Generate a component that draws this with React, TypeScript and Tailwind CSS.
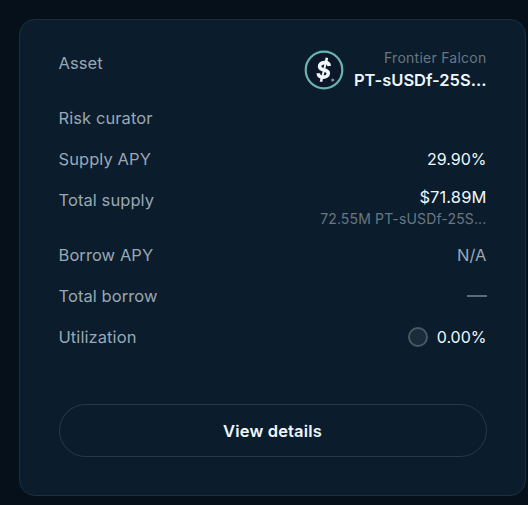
import React from "react";

const Label: React.FC<{ children: React.ReactNode }> = ({ children }) => (
  <span className="text-[16.5px] tracking-[0.08px] text-[#99a7b4]">{children}</span>
);

const AssetIcon: React.FC = () => (
  <svg width="40" height="40" viewBox="0 0 40 40" fill="none" className="-mt-px">
    <circle cx="20" cy="20" r="18.3" fill="#0c172a" stroke="#68b5ad" strokeWidth="2.2" />
    <path
      d="M25.300 16c-.3-2.500-2.500-3.600-5-3.400-3 .2-4.900 2-4.700 4.200.5 4.400 8.800 2.100 8.700 6.400-.1 2.500-2.400 4.100-5.100 4-3 0-4.800-1.600-4.900-4"
      stroke="#eef7fc"
      strokeWidth="3.600"
    />
    <path d="M22.900 7.800l-1.200 6M18.200 26l-1.200 5.800" stroke="#eef7fc" strokeWidth="2.600" />
    <path d="M21.700 13l-3.400 14" stroke="#eef7fc" strokeWidth="2" />
    <circle cx="28.700" cy="30" r="1.600" fill="#7f8b9a" />
  </svg>
);

const App: React.FC = () => {
  return (
    <div className="h-[505px] w-[528px] overflow-hidden bg-[#05101b] pl-[19px] pt-[19px] font-['Inter',sans-serif] text-base leading-6 text-[#eef7fc]">
      <div className="flex h-[477px] w-[507px] flex-col rounded-2xl border border-[#1b2f3d] bg-[#0b1c2c] px-[38.5px] pt-[31px]">
        <div className="flex h-[55px] justify-between">
          <Label>Asset</Label>
          <div className="flex gap-[10px]">
            <AssetIcon />
            <div className="text-right">
              <div className="mb-[3px] text-sm leading-[14px] tracking-[0.25px] text-[#687782]">
                Frontier Falcon
              </div>
              <div className="text-[16.5px] font-semibold">PT-sUSDf-25S...</div>
            </div>
          </div>
        </div>
        <div className="flex h-[41px] justify-between">
          <Label>Risk curator</Label>
        </div>
        <div className="flex h-[41px] justify-between">
          <Label>Supply APY</Label>
          <span>29.90%</span>
        </div>
        <div className="flex h-[55px] justify-between">
          <Label>Total supply</Label>
          <div className="-mt-[3px] text-right">
            <div className="text-[16.5px] tracking-[0.1px]">$71.89M</div>
            <div className="text-sm leading-5 tracking-[0.15px] text-[#687782]">
              72.55M PT-sUSDf-25S...
            </div>
          </div>
        </div>
        <div className="flex h-[41px] justify-between">
          <Label>Borrow APY</Label>
          <Label>N/A</Label>
        </div>
        <div className="flex h-[41px] justify-between">
          <Label>Total borrow</Label>
          <div className="mt-[11px] h-[2px] w-5 bg-[#5d6b78]" />
        </div>
        <div className="flex h-[79px] items-start justify-between">
          <Label>Utilization</Label>
          <div className="flex items-center gap-[9px]">
            <span className="size-5 rounded-full border-2 border-[#485865] bg-[#1b2b39]" />
            <span>0.00%</span>
          </div>
        </div>
        <button className="h-[53px] rounded-full border border-[#283a47] text-[16.5px] font-semibold tracking-[0.15px]">
          View details
        </button>
      </div>
    </div>
  );
};

export default App;
